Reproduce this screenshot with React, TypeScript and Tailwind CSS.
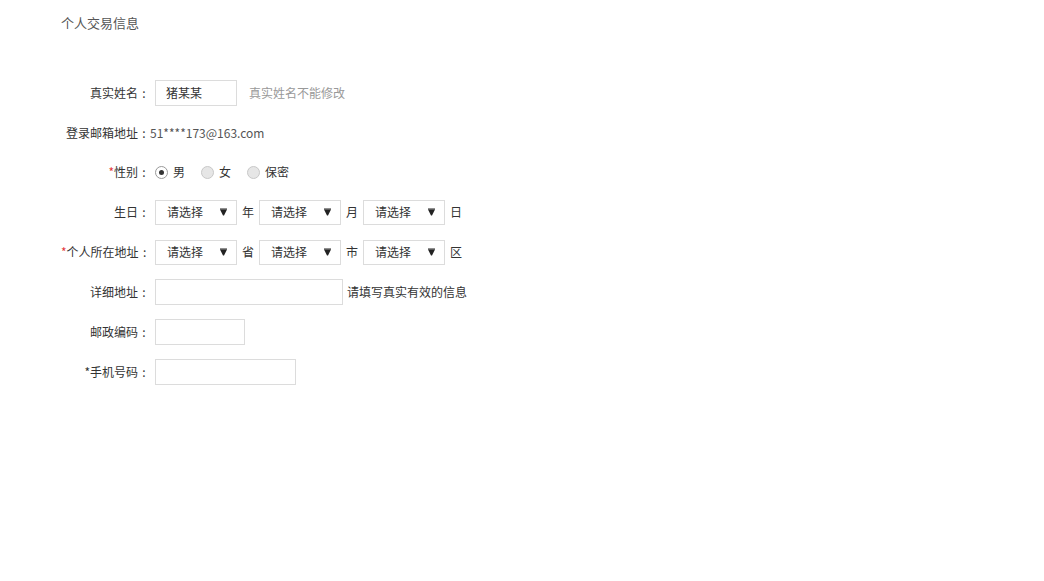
import type { ReactNode } from "react"

const font = { fontFamily: '"Noto Sans CJK SC", "Liberation Sans", sans-serif' }

const Colon = () => <span className="inline-block w-[12px] text-center">:</span>

const Row = ({ label, star, starRed, children }: { label: string; star?: boolean; starRed?: boolean; children?: ReactNode }) => (
  <div className="flex items-center h-10">
    <div className="w-[89px] shrink-0 text-right whitespace-nowrap text-[12px] text-[#333]">
      {star && <span className={starRed ? "text-[#e4393c]" : "text-[#333]"}>*</span>}
      {label}
      <Colon />
    </div>
    <div className="flex items-center ml-[5px]">{children}</div>
  </div>
)

const Select = () => (
  <div className="flex items-center justify-between w-[82px] h-[25px] border border-[#dcdcdc] bg-white pl-[11px] pr-[9px] text-[12px] text-[#333]">
    <span>请选择</span>
    <svg width="7" height="8" viewBox="0 0 7 8">
      <rect x="0" y="0.5" width="7" height="1" fill="#222" />
      <path d="M0 1.5h7L4 7.5h-1z" fill="#222" />
    </svg>
  </div>
)

const Unit = ({ children }: { children: ReactNode }) => (
  <span className="mx-[5px] text-[12px] text-[#333]">{children}</span>
)

const Radio = ({ checked, label, first }: { checked?: boolean; label: string; first?: boolean }) => (
  <label className={`flex items-center ${first ? "" : "ml-[16px]"}`}>
    <span
      className={`flex items-center justify-center size-[13px] rounded-full border ${
        checked ? "border-[#999] bg-white" : "border-[#c8c8c8] bg-[#e6e6e6]"
      }`}
    >
      {checked && <span className="size-[5px] rounded-full bg-[#333]" />}
    </span>
    <span className="ml-[5px] text-[12px] text-[#333]">{label}</span>
  </label>
)

export default function App() {
  return (
    <div className="min-h-[581px] bg-white pl-[61px] pt-[15px]" style={font}>
      <div className="h-[16px] leading-[16px] text-[13px] text-[#555]">个人交易信息</div>

      <div className="mt-[42px]">
        <Row label="真实姓名">
          <div className="flex items-center w-[82px] h-[26px] border border-[#dcdcdc] pl-[10px] text-[12px] text-[#333]">猪某某</div>
          <span className="ml-[12px] text-[12px] text-[#999]">真实姓名不能修改</span>
        </Row>

        <div className="flex items-center h-[39px] text-[12px] text-[#333] pl-[5px] whitespace-nowrap">
          <span>
            登录邮箱地址
            <Colon />
          </span>
          <span className="text-[#555]">51****173@163.com</span>
        </div>

        <Row label="性别" star starRed>
          <Radio checked label="男" first />
          <Radio label="女" />
          <Radio label="保密" />
        </Row>

        <Row label="生日">
          <Select />
          <Unit>年</Unit>
          <Select />
          <Unit>月</Unit>
          <Select />
          <Unit>日</Unit>
        </Row>

        <Row label="个人所在地址" star starRed>
          <Select />
          <Unit>省</Unit>
          <Select />
          <Unit>市</Unit>
          <Select />
          <Unit>区</Unit>
        </Row>

        <Row label="详细地址">
          <div className="w-[188px] h-[26px] border border-[#dcdcdc]" />
          <span className="ml-[4px] text-[12px] text-[#333]">请填写真实有效的信息</span>
        </Row>

        <Row label="邮政编码">
          <div className="w-[90px] h-[26px] border border-[#dcdcdc]" />
        </Row>

        <Row label="手机号码" star>
          <div className="w-[141px] h-[26px] border border-[#dcdcdc]" />
        </Row>
      </div>
    </div>
  )
}
